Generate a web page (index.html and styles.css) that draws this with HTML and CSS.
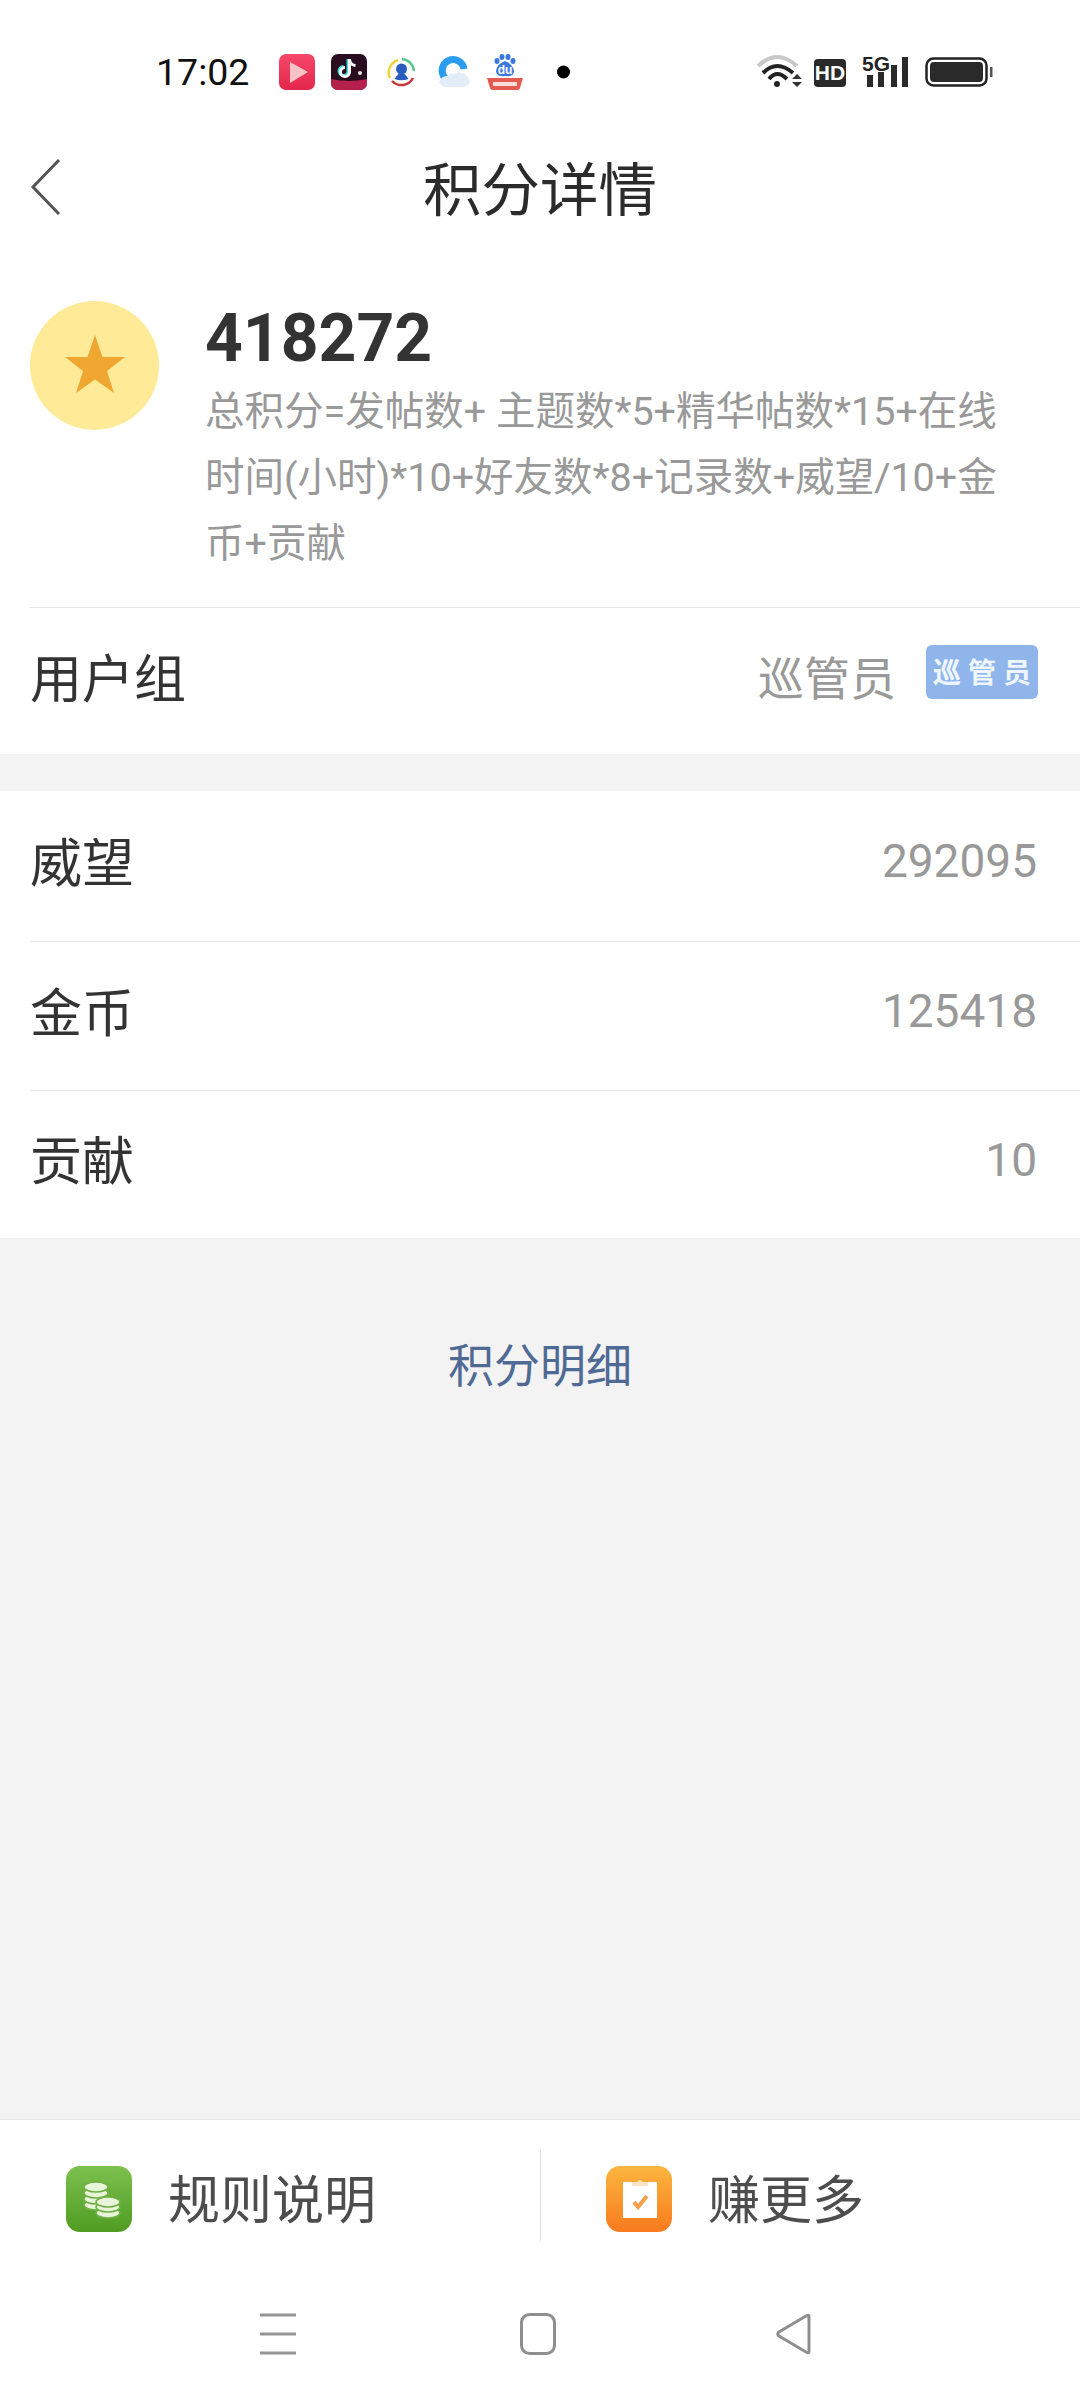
FILE: index.html
```html
<!DOCTYPE html>
<html lang="zh-CN">
<head>
<meta charset="utf-8">
<title>积分详情</title>
<link rel="stylesheet" href="styles.css">
</head>
<body>
<div class="app">
  <div class="status">
    <span class="time">17:02</span>
    <div class="notifs">
      <svg class="ic36" viewBox="0 0 36 36"><defs><linearGradient id="pl" x1="0" y1="0" x2="0" y2="1"><stop offset="0" stop-color="#f5486a"/><stop offset="1" stop-color="#e4264c"/></linearGradient></defs><rect width="36" height="36" rx="7" fill="url(#pl)"/><path d="M11 8 L29 18 L11 29Z" fill="#f9c3c6"/></svg>
      <svg class="ic36" viewBox="0 0 36 36"><rect width="36" height="36" rx="7" fill="#2a0d1e"/><path d="M0 25 Q18 29 36 25 V29 a7 7 0 0 1 -7 7 H7 a7 7 0 0 1 -7 -7Z" fill="#b5204c"/><path d="M17 5 V17 a4.500 4.500 0 1 1 -4.500 -4.500" fill="none" stroke="#3ddbd9" stroke-width="3"/><path d="M18.500 5 V18 a4.500 4.500 0 1 1 -4.500 -4.500 M18.500 6 q1 5 6 5.500" fill="none" stroke="#fff" stroke-width="3"/><circle cx="29" cy="19" r="2" fill="#e8e8e8"/></svg>
      <svg class="ic36" viewBox="0 0 36 36"><path d="M7 24 A13 13 0 0 1 15 6" fill="none" stroke="#f2d23c" stroke-width="2.500"/><path d="M19 5 A13 13 0 0 1 31 17" fill="none" stroke="#58c98c" stroke-width="2.500"/><path d="M30 24 A13 13 0 0 1 9 27" fill="none" stroke="#c8363a" stroke-width="2.500"/><circle cx="18.500" cy="15" r="5.500" fill="#2a5cc0"/><path d="M11.500 25 q7 -12 14 0 q-7 2.500 -14 0Z" fill="#2a5cc0"/></svg>
      <svg class="ic36" viewBox="0 0 36 36"><path d="M29 15 A11 11 0 1 0 10 24" fill="none" stroke="#2a9df0" stroke-width="7"/><path d="M4 28 q3 -7 9 -6 q5 -7 12 -3 q8 0 10 9 q-2 5 -9 5 H12 q-6 0 -8 -5Z" fill="#e3edf7"/><circle cx="19" cy="15" r="5" fill="#fff"/></svg>
      <svg class="ic36" viewBox="0 0 36 36"><ellipse cx="10" cy="7" rx="2.500" ry="3" fill="#3a78e0"/><ellipse cx="15" cy="3" rx="2.500" ry="3" fill="#3a78e0"/><ellipse cx="21" cy="3" rx="2.500" ry="3" fill="#3a78e0"/><ellipse cx="26" cy="7" rx="2.500" ry="3" fill="#3a78e0"/><path d="M18 7 q-8 3 -9 10 q0 6 9 5 q9 1 9 -5 q-1 -7 -9 -10Z" fill="#3a78e0"/><text class="du" x="18" y="20" text-anchor="middle">du</text><path d="M0 24 H36 L33 34 a3 3 0 0 1 -2 2 H5 a3 3 0 0 1 -2 -2Z" fill="#e35a50"/><rect x="6" y="28" width="24" height="4" fill="#fbd9d6"/></svg>
      <svg class="ic36" viewBox="0 0 36 36"><circle cx="24.500" cy="18" r="6.500" fill="#000"/></svg>
    </div>
    <div class="sysicons">
      <svg class="wifi" viewBox="0 0 46 36"><path d="M1 12 Q20 -6 40 12" fill="none" stroke="#c8c8c8" stroke-width="4"/><path d="M6 19 Q20 5 36 19 M12 25 Q20 15 30 25" fill="none" stroke="#222" stroke-width="4"/><circle cx="20" cy="30" r="3" fill="#222"/><path d="M35 25 L40 20 L45 25Z M35 28 L40 33 L45 28Z" fill="#333"/></svg>
      <span class="hd">HD</span>
      <div class="signal">
        <span class="fiveg">5G</span>
        <svg class="bars" viewBox="0 0 46 32"><rect x="5" y="20" width="6" height="12" fill="#2a2a2a"/><rect x="16" y="17" width="6" height="15" fill="#2a2a2a"/><rect x="29" y="10" width="6" height="22" fill="#2a2a2a"/><rect x="40" y="2" width="6" height="30" fill="#2a2a2a"/></svg>
      </div>
      <svg class="battery" viewBox="0 0 68 30"><rect x="1.500" y="1.500" width="60" height="27" rx="7" fill="none" stroke="#222" stroke-width="2.500"/><rect x="5" y="5" width="53" height="20" rx="4" fill="#2a2a2a"/><rect x="65" y="10" width="2.500" height="10" fill="#555"/></svg>
    </div>
  </div>

  <header class="topbar">
    <svg class="back" viewBox="0 0 40 64"><path d="M29 7 L3 34 L29 61" fill="none" stroke="#555" stroke-width="3"/></svg>
    <h1 class="title">积分详情</h1>
    <span></span>
  </header>

  <section class="card">
    <div class="summary">
      <div class="medal">
        <svg class="star" viewBox="0 0 62 62"><path d="M31 0 L38.500 22 L61 22 L43 36 L50 58 L31 44.500 L12 58 L19 36 L1 22 L23.500 22Z" fill="#f0a732"/></svg>
      </div>
      <div class="summary-text">
        <div class="score">418272</div>
        <p class="desc">总积分=发帖数+ 主题数*5+精华帖数*15+在线时间(小时)*10+好友数*8+记录数+威望/10+金币+贡献</p>
      </div>
    </div>
    <div class="row row-group">
      <span class="label">用户组</span>
      <div class="group-val">
        <span class="val-cjk">巡管员</span>
        <span class="badge">巡管员</span>
      </div>
    </div>
  </section>

  <section class="card stats">
    <div class="row stat"><span class="label">威望</span><span class="val">292095</span></div>
    <div class="row stat"><span class="label">金币</span><span class="val">125418</span></div>
    <div class="row stat"><span class="label">贡献</span><span class="val">10</span></div>
  </section>

  <a class="detail-link">积分明细</a>

  <footer class="bottom">
    <div class="tabs">
      <div class="tab">
        <svg class="tab-ic" viewBox="0 0 66 66"><defs><linearGradient id="gr" x1="0" y1="0" x2="0" y2="1"><stop offset="0" stop-color="#7cc04e"/><stop offset="1" stop-color="#4f9c22"/></linearGradient></defs><rect width="66" height="66" rx="14" fill="url(#gr)"/><g fill="#e9f5da" stroke="#6fb044" stroke-width="1.500"><ellipse cx="30" cy="39" rx="12" ry="5"/><ellipse cx="30" cy="33" rx="12" ry="5"/><ellipse cx="30" cy="27" rx="12" ry="5"/><ellipse cx="30" cy="21" rx="12" ry="5"/><ellipse cx="42" cy="47" rx="12" ry="5"/><ellipse cx="42" cy="41" rx="12" ry="5"/><ellipse cx="42" cy="36" rx="12" ry="5"/></g></svg>
        <span class="tab-text">规则说明</span>
      </div>
      <div class="tab tab-right">
        <svg class="tab-ic" viewBox="0 0 66 66"><defs><linearGradient id="or" x1="0" y1="0" x2="0" y2="1"><stop offset="0" stop-color="#fcb63f"/><stop offset="1" stop-color="#f87a1d"/></linearGradient></defs><rect width="66" height="66" rx="14" fill="url(#or)"/><rect x="17" y="16" width="34" height="36" fill="#fff"/><path d="M26 20 v-4 h5 a3.500 3.500 0 0 1 6 0 h5 v4Z" fill="#fde3c0"/><path d="M28 36 L32 41 L41 30" fill="none" stroke="#f6a04c" stroke-width="4"/></svg>
        <span class="tab-text">赚更多</span>
      </div>
    </div>
    <nav class="navbar">
      <svg class="nav-ic" viewBox="0 0 36 42"><path d="M0 2 H36 M0 21 H36 M0 40 H36" stroke="#959595" stroke-width="3"/></svg>
      <svg class="nav-ic" viewBox="0 0 36 42"><rect x="1.500" y="1.500" width="33" height="39" rx="8" fill="none" stroke="#8f8f8f" stroke-width="3"/></svg>
      <svg class="nav-ic" viewBox="0 0 36 42"><path d="M33 4 Q33.500 1 30 3 L3 19 Q0.500 21 3 23 L30 39 Q33.500 41 33 38Z" fill="none" stroke="#8f8f8f" stroke-width="3"/></svg>
    </nav>
  </footer>
</div>
</body>
</html>
```

FILE: styles.css
```css
* { box-sizing: border-box; }
html, body { margin: 0; padding: 0; }
body { font-family: Roboto, "Noto Sans CJK SC", sans-serif; color: #333; }
.app { width: 1080px; height: 2400px; background: #f3f3f3; display: flex; flex-direction: column; overflow: hidden; }

.status { height: 100px; background: #fff; display: flex; align-items: flex-start; padding: 54px 0 0 156px; }
.time { font-size: 37.500px; line-height: 36px; color: #111; width: 123px; }
.notifs { display: flex; gap: 16px; }
.ic36 { width: 36px; height: 36px; display: block; }
.du { font: 700 12px "Liberation Sans", sans-serif; fill: #fff; }
.sysicons { display: flex; align-items: flex-start; margin-left: 182px; }
.wifi { width: 46px; height: 36px; display: block; }
.hd { width: 32px; height: 28px; margin: 5px 0 0 11px; background: #2a2a2a; color: #fff; border-radius: 4px; font: 700 21px/28px "Liberation Sans", sans-serif; text-align: center; }
.signal { position: relative; width: 46px; height: 34px; margin: 1px 0 0 16px; }
.fiveg { position: absolute; left: 0; top: -1px; font: 700 21px/20px "Liberation Sans", sans-serif; color: #222; z-index: 1; }
.bars { position: absolute; left: 0; top: 0; width: 46px; height: 32px; }
.battery { width: 68px; height: 30px; margin: 3px 0 0 17px; display: block; }

.topbar { height: 176px; background: #fff; display: grid; grid-template-columns: 1fr auto 1fr; align-items: center; }
.back { width: 40px; height: 64px; display: block; margin: 0 0 6px 30px; }
.title { margin: 6px 0 0; font-size: 58.500px; line-height: 80px; font-weight: 400; color: #2b2b2b; }

.card { background: #fff; }
.summary { display: flex; align-items: flex-start; gap: 46px; padding: 21px 0 30px 30px; }
.medal { width: 129px; height: 129px; flex: none; margin-top: 4px; border-radius: 50%; background: #ffea98; display: flex; align-items: center; justify-content: center; }
.star { width: 62px; height: 62px; display: block; }
.summary-text { width: 810px; }
.score { font-size: 66px; line-height: 84px; height: 82px; font-weight: 700; color: #333; }
.desc { margin: 0; font-size: 39.500px; line-height: 66px; color: #999; }

.row { display: flex; align-items: center; justify-content: space-between; margin-left: 30px; padding-right: 43px; border-top: 1px solid #e5e5e5; }
.row-group { height: 147px; padding-bottom: 12px; padding-right: 42px; }
.label { font-size: 52px; color: #333; }
.group-val { display: flex; align-items: center; gap: 30px; }
.val-cjk { font-size: 46px; color: #999; }
.badge { width: 112px; height: 54px; margin-bottom: 6px; border-radius: 6px; background: #8fb5ea; color: #eef6ff; font-size: 28px; font-weight: 700; line-height: 58px; letter-spacing: 7px; text-align: center; padding-left: 7px; white-space: nowrap; }

.stats { margin-top: 37px; }
.stat { height: 149px; padding-bottom: 14px; }
.stat:first-child { height: 150px; border-top: 0; }
.stat:last-child { height: 148px; }
.val { font-size: 46px; color: #999; margin-top: 4px; }

.detail-link { display: block; margin-top: 90px; text-align: center; font-size: 46px; line-height: 76px; color: #4f6a94; }

.bottom { margin-top: auto; height: 281px; background: #fff; border-top: 1px solid #e6e6e6; display: flex; flex-direction: column; }
.tabs { display: grid; grid-template-columns: 540px 1fr; padding-top: 30px; height: 121px; }
.tab { display: flex; align-items: center; gap: 36px; padding: 0 0 0 66px; height: 91px; }
.tab-right { border-left: 1px solid #e0e0e0; padding-left: 65px; }
.tab-ic { width: 66px; height: 66px; flex: none; display: block; margin-top: 6px; }
.tab-text { font-size: 52px; color: #4d4d4d; margin-top: 2px; }
.navbar { display: flex; justify-content: flex-start; gap: 224px; padding: 72px 0 0 260px; }
.navbar .nav-ic:last-child { margin-left: -4px; }
.nav-ic { width: 36px; height: 42px; display: block; }
```
